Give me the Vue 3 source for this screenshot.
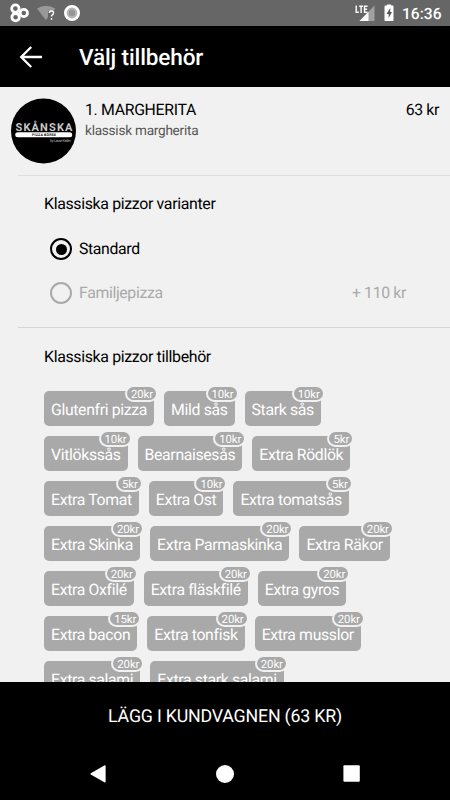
<script setup>
const rows = [
  [['Glutenfri pizza', 20], ['Mild sås', 10], ['Stark sås', 10]],
  [['Vitlökssås', 10], ['Bearnaisesås', 10], ['Extra Rödlök', 5]],
  [['Extra Tomat', 5], ['Extra Ost', 10], ['Extra tomatsås', 5]],
  [['Extra Skinka', 20], ['Extra Parmaskinka', 20], ['Extra Räkor', 20]],
  [['Extra Oxfilé', 20], ['Extra fläskfilé', 20], ['Extra gyros', 20]],
  [['Extra bacon', 15], ['Extra tonfisk', 20], ['Extra musslor', 20]],
  [['Extra salami', 20], ['Extra stark salami', 20]],
]
</script>

<template>
  <div class="screen">
    <div class="status">
      <svg class="status-left" width="90" height="26" viewBox="0 0 90 26">
        <g fill="none" stroke="#fff" stroke-width="2.8">
          <circle cx="15.4" cy="8.6" r="3.7" />
          <circle cx="15.6" cy="17.2" r="3.7" />
          <circle cx="23.8" cy="13" r="3.7" />
        </g>
        <path d="M37 8.6Q46 2.8 55.200 8.600L53.500 11H48V17L46 20.200Z" fill="#999" />
        <path d="M49.300 12.900Q49.500 11 51.500 11Q53.500 11 53.500 13Q53.500 14.200 52.300 14.900Q51.500 15.400 51.500 16.600M51.500 18V19.700" fill="none" stroke="#fff" stroke-width="1.500" />
        <circle cx="72" cy="13" r="6.700" fill="#b5b5b5" stroke="#fff" stroke-width="2.600" />
        <circle cx="72" cy="13" r="3.200" fill="#969696" />
      </svg>
      <div class="status-right">
        <svg width="46" height="26" viewBox="0 0 46 26">
          <path d="M22.500 21L37.500 5.500V21Z" fill="#a0a0a0" />
          <path d="M22.500 21L31.500 11.700V21Z" fill="#fff" />
          <path d="M19.200 5.500V12.300H21.800M22.200 6.200H26M24.100 6.200V13M30.500 6.200H27.500V12.300H30.500M27.500 9.200H30.100" fill="none" stroke="#fff" stroke-width="1.400" />
        </svg>
        <svg width="16" height="26" viewBox="0 0 16 26">
          <path d="M.5 6.300Q.5 5.500 1.300 5.500H2.900V4.500H7.100V5.500H8.700Q9.500 5.500 9.500 6.300V20.200Q9.500 21 8.700 21H1.300Q.5 21 .5 20.200Z" fill="#fff" />
          <path d="M6.300 8L2.500 14H4.700V18L8 12H6.200Z" fill="#555" />
        </svg>
        <span class="clock">16:36</span>
      </div>
    </div>

    <header class="appbar">
      <svg width="24" height="24" viewBox="0 0 24 24">
        <path d="M24 12H3.700M13.200 2L3.200 12L13.200 22" fill="none" stroke="#fff" stroke-width="2.300" />
      </svg>
      <h1>Välj tillbehör</h1>
    </header>

    <main class="content">
      <section class="product">
        <svg class="logo" width="66" height="66" viewBox="0 0 66 66">
          <circle cx="32.500" cy="33" r="32.500" fill="#000" />
          <text x="4.500" y="33" class="brand" textLength="57">SKÅNSKA</text>
          <rect x="4.200" y="34.300" width="57" height="5" rx="2.500" fill="#fff" />
          <text x="21" y="38.200" class="strap" textLength="24">PIZZA BÖRSE</text>
          <text x="39" y="43.800" class="signature" textLength="21">by Lasse Kallen</text>
        </svg>
        <div class="product-text">
          <div class="name">1. MARGHERITA</div>
          <div class="desc">klassisk margherita</div>
        </div>
        <div class="price">63 kr</div>
      </section>

      <section class="variants">
        <h2>Klassiska pizzor varianter</h2>
        <div class="option">
          <span class="radio on"></span><span class="label">Standard</span>
        </div>
        <div class="option muted">
          <span class="radio"></span><span class="label">Familjepizza</span><span class="label extra">+ 110 kr</span>
        </div>
      </section>

      <section class="toppings">
        <h2>Klassiska pizzor tillbehör</h2>
        <div v-for="(row, i) in rows" :key="i" class="row">
          <div v-for="[name, price] in row" :key="name" class="chip">
            {{ name }}<span class="badge">{{ price }}kr</span>
          </div>
        </div>
      </section>
    </main>

    <footer class="cart">LÄGG I KUNDVAGNEN (63 KR)</footer>
    <nav class="nav">
      <svg width="16" height="18" viewBox="0 0 16 18"><path d="M.8 8.300L14.700 .3Q15.600 0 15.600 1V16.800Q15.600 17.800 14.700 17.400L.8 9.600Q0 9 .8 8.300Z" fill="#fff" /></svg>
      <svg width="18" height="18" viewBox="0 0 18 18"><circle cx="9" cy="9" r="9" fill="#fff" /></svg>
      <svg width="17" height="17" viewBox="0 0 17 17"><rect x=".4" y=".3" width="16.400" height="16.400" rx="1" fill="#fff" /></svg>
    </nav>
  </div>
</template>

<style>
body { background: #000; }
</style>

<style scoped>
.screen {
  width: 450px;
  height: 800px;
  display: flex;
  flex-direction: column;
  overflow: hidden;
  background: #f1f1f1;
  color: #000;
  font-family: Roboto, "Liberation Sans", sans-serif;
  font-size: 15.8px;
  letter-spacing: -0.34px;
  text-rendering: geometricPrecision;
}
.status {
  flex: none;
  height: 26px;
  display: flex;
  justify-content: space-between;
  background: #666;
  color: #fff;
}
.status-right { display: flex; padding-right: 9px; }
.status-right svg:first-child { margin-right: 1px; }
.clock {
  margin-left: 2px;
  line-height: 28px;
  font-size: 15.6px;
  font-weight: 500;
  letter-spacing: 0;
  width: 39px;
}
.appbar {
  flex: none;
  height: 61px;
  display: flex;
  align-items: center;
  gap: 37px;
  padding-left: 18px;
  background: #000;
  color: #fff;
}
h1 { margin: 2px 0 0; font-size: 22.6px; font-weight: 500; letter-spacing: -0.15px; }
.content { flex: 1; min-height: 0; overflow: hidden; }
.product {
  display: flex;
  height: 88px;
  box-sizing: border-box;
  padding: 11px 11px 0 11px;
}
.product-text { margin-left: 8px; flex: 1; }
.name, .price { line-height: 23px; }
.name { letter-spacing: -0.3px; }
.desc { font-size: 13.6px; line-height: 21px; color: #555; letter-spacing: -0.25px; }
.brand { font-size: 11px; font-weight: 700; fill: #c9c9c9; letter-spacing: 0; }
.strap { font-size: 3.6px; font-weight: 700; fill: #000; letter-spacing: 0; }
.signature { font-size: 4px; font-style: italic; fill: #aaa; letter-spacing: 0; }
.variants {
  margin-left: 18px;
  height: 153px;
  box-sizing: border-box;
  border-top: 1px solid #dedede;
  border-bottom: 1px solid #d6d6d6;
  padding: 18px 44px 0 26px;
}
h2 { margin: 0; font-size: 15.9px; font-weight: 400; line-height: 20px; }
.option {
  display: flex;
  align-items: center;
  height: 44px;
  padding-left: 6px;
}
h2 + .option { margin-top: 13px; }
.label { padding-bottom: 1px; }
.radio {
  box-sizing: border-box;
  width: 22px;
  height: 22px;
  border: 2.2px solid currentColor;
  border-radius: 50%;
  margin-right: 7px;
  display: flex;
}
.radio.on::after {
  content: "";
  width: 11px;
  height: 11px;
  margin: auto;
  border-radius: 50%;
  background: #000;
}
.muted { color: #a9a9a9; }
.extra { margin-left: auto; }
.toppings { padding: 19px 0 0 44px; }
.toppings h2 { margin-bottom: 24px; }
.row { display: flex; gap: 10px; margin-bottom: 10px; }
.chip {
  position: relative;
  height: 35px;
  line-height: 37px;
  padding: 0 7px;
  border-radius: 5px;
  background: #a9a9a9;
  color: #fff;
  white-space: nowrap;
}
.badge {
  position: absolute;
  top: -6px;
  right: -4px;
  height: 13px;
  line-height: 14px;
  padding: 0 3px 0 4px;
  border: 2px solid #f1f1f1;
  border-radius: 9px;
  background: #a9a9a9;
  font-size: 11.4px;
  letter-spacing: -0.1px;
}
.cart {
  flex: none;
  height: 65px;
  line-height: 69px;
  text-align: center;
  background: #000;
  color: #fff;
  font-size: 17.8px;
  letter-spacing: -0.2px;
}
.nav {
  flex: none;
  height: 53px;
  box-sizing: border-box;
  display: flex;
  justify-content: space-between;
  align-items: center;
  padding: 0 90px;
  background: #000;
}
</style>
